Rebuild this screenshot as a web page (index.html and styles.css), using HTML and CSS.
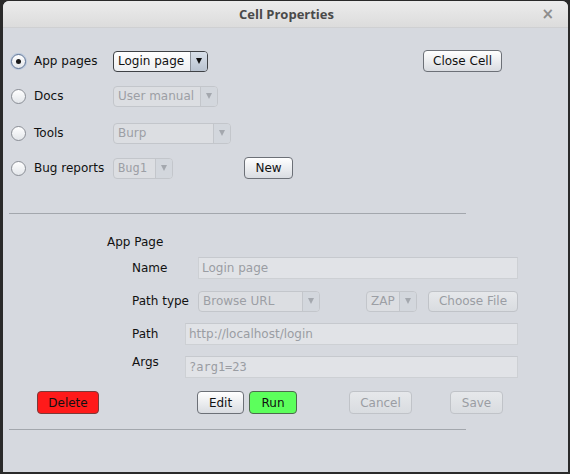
FILE: index.html
```html
<!DOCTYPE html>
<html>
<head>
<meta charset="utf-8">
<link rel="stylesheet" href="styles.css">
</head>
<body>
<div class="window">
  <div class="titlebar">
    <span class="title">Cell Properties</span>
    <span class="close">×</span>
  </div>
  <div class="content">
    <div class="row r1">
      <span class="radio checked"></span><span class="rlabel">App pages</span>
      <div class="combo w95"><span class="ctext">Login page</span><span class="arrow"><i></i></span></div>
      <button class="btn closecell">Close Cell</button>
    </div>
    <div class="row r2">
      <span class="radio"></span><span class="rlabel">Docs</span>
      <div class="combo dis w105"><span class="ctext">User manual</span><span class="arrow"><i></i></span></div>
    </div>
    <div class="row r3">
      <span class="radio"></span><span class="rlabel">Tools</span>
      <div class="combo dis w118"><span class="ctext">Burp</span><span class="arrow"><i></i></span></div>
    </div>
    <div class="row r4">
      <span class="radio"></span><span class="rlabel">Bug reports</span>
      <div class="combo dis w60"><span class="ctext mono">Bug1</span><span class="arrow"><i></i></span></div>
      <button class="btn newbtn">New</button>
    </div>
    <div class="sep sep1"></div>
    <div class="section">App Page</div>
    <div class="frow fname">
      <span class="flabel lw66">Name</span>
      <div class="field f320">Login page</div>
    </div>
    <div class="frow fpt">
      <span class="flabel lw66">Path type</span>
      <div class="combo dis w122"><span class="ctext">Browse URL</span><span class="arrow"><i></i></span></div>
      <div class="combo dis w51 zap"><span class="ctext">ZAP</span><span class="arrow"><i></i></span></div>
      <button class="btn dbtn choose">Choose File</button>
    </div>
    <div class="frow fpath">
      <span class="flabel lw53">Path</span>
      <div class="field f333">http://localhost/login</div>
    </div>
    <div class="frow fargs">
      <span class="flabel lw53 up">Args</span>
      <div class="field f333 mono">?arg1=23</div>
    </div>
    <div class="brow">
      <button class="btn del">Delete</button>
      <button class="btn edit">Edit</button>
      <button class="btn run">Run</button>
      <button class="btn dbtn cancel">Cancel</button>
      <button class="btn dbtn save">Save</button>
    </div>
    <div class="sep sep2"></div>
  </div>
</div>
</body>
</html>
```

FILE: styles.css
```css
html, body {
  margin: 0;
  padding: 0;
}
body {
  background: #2a2a2a;
  width: 570px;
  height: 474px;
  overflow: hidden;
  font-family: "DejaVu Sans", sans-serif;
  font-size: 12px;
  color: #111;
}
.window {
  margin: 1px 2px 0 3px;
  height: 471px;
  background: #d6d9df;
  border-radius: 6px 6px 0 0;
  overflow: hidden;
}
.titlebar {
  height: 27px;
  background: linear-gradient(#ececec, #dcdcdc);
  border-bottom: 1px solid #cfd0d2;
  box-sizing: border-box;
  display: flex;
  align-items: center;
  justify-content: center;
  position: relative;
}
.title {
  font-family: "Open Sans", sans-serif;
  font-weight: bold;
  font-size: 13px;
  color: #4a4a4a;
  margin-left: 2px;
}
.close {
  position: absolute;
  right: 14px;
  top: 4px;
  font-family: "DejaVu Sans", sans-serif;
  font-weight: bold;
  font-size: 15px;
  color: #8d8d8d;
}
.content {
  display: flex;
  flex-direction: column;
}
.row {
  display: flex;
  align-items: center;
  height: 22px;
}
.r1 { margin-top: 22px; }
.r2 { margin-top: 13px; }
.r3 { margin-top: 15px; }
.r4 { margin-top: 13px; }
.radio {
  width: 13px;
  height: 13px;
  border: 1px solid #8a8e95;
  border-radius: 50%;
  background: linear-gradient(#ffffff, #e3e6ea);
  margin-left: 8px;
  flex: none;
  display: flex;
  align-items: center;
  justify-content: center;
}
.radio.checked {
  border-color: #5d7395;
  box-shadow: 0 0 0 1px #b8c7dc;
}
.radio.checked::after {
  content: "";
  width: 5px;
  height: 5px;
  border-radius: 50%;
  background: #1b1b1b;
}
.rlabel {
  margin-left: 8px;
  width: 79px;
  flex: none;
  white-space: nowrap;
}
.combo {
  height: 21px;
  box-sizing: border-box;
  border: 1px solid #3e4145;
  border-radius: 4px;
  background: linear-gradient(#ffffff, #eceef1);
  display: flex;
  align-items: stretch;
  flex: none;
  overflow: hidden;
}
.ctext {
  flex: 1;
  padding-left: 4px;
  display: flex;
  align-items: center;
  white-space: nowrap;
  font-size: 12px;
}
.arrow {
  width: 16px;
  border-left: 1px solid #8a9099;
  background: linear-gradient(#d9e0ea, #b9c3d0);
  display: flex;
  align-items: center;
  justify-content: center;
}
.arrow i {
  width: 0;
  height: 0;
  border-left: 3.5px solid transparent;
  border-right: 3.5px solid transparent;
  border-top: 6px solid #111;
}
.combo.dis {
  border-color: #c3c6cb;
  background: #dcdee2;
}
.combo.dis .ctext { color: #9c9fa5; }
.combo.dis .arrow {
  border-left-color: #c3c6cb;
  background: #d3d7dd;
}
.combo.dis .arrow i { border-top-color: #a4a8ae; }
.w95 { width: 95px; }
.w105 { width: 105px; }
.w118 { width: 118px; }
.w60 { width: 60px; }
.w122 { width: 122px; }
.w51 { width: 51px; }
.mono { font-family: "DejaVu Sans Mono", monospace; }
.btn {
  font-family: "DejaVu Sans", sans-serif;
  font-size: 12px;
  color: #111;
  height: 22px;
  box-sizing: border-box;
  border: 1px solid #6c7077;
  border-radius: 4px;
  background: linear-gradient(#ffffff, #d9dce1);
  padding: 0;
  flex: none;
}
.closecell { width: 79px; margin-left: 215px; }
.newbtn { width: 49px; margin-left: 71px; }
.sep {
  height: 1px;
  background: #a3a7ad;
  width: 457px;
  margin-left: 6px;
}
.sep1 { margin-top: 34px; }
.section {
  margin-top: 19px;
  margin-left: 104px;
  height: 18px;
  line-height: 18px;
}
.frow {
  display: flex;
  align-items: center;
  height: 22px;
  margin-left: 129px;
}
.fname { margin-top: 6px; }
.fpt { margin-top: 11px; }
.fpath { margin-top: 11px; }
.fargs { margin-top: 11px; }
.flabel { flex: none; }
.lw66 { width: 66px; }
.lw53 { width: 53px; }
.up { position: relative; top: -5px; }
.field {
  height: 22px;
  box-sizing: border-box;
  border: 1px solid #cdd0d4;
  border-top-color: #c6c9ce;
  background: #e1e3e7;
  color: #9a9da3;
  padding-left: 3px;
  display: flex;
  align-items: center;
  white-space: nowrap;
  flex: none;
}
.f320 { width: 320px; }
.f333 { width: 333px; }
.zap { margin-left: 46px; }
.dbtn {
  border-color: #c0c3c8;
  background: linear-gradient(#e6e8eb, #d9dce0);
  color: #9a9da3;
}
.choose { width: 90px; margin-left: 11px; height: 21px; }
.brow {
  display: flex;
  align-items: center;
  margin-top: 13px;
  height: 23px;
  margin-left: 34px;
}
.brow .btn { height: 23px; }
.del {
  width: 62px;
  background: #ff1a1a;
  border-color: #7a3a3a;
}
.edit { width: 47px; margin-left: 98px; }
.run {
  width: 48px;
  margin-left: 5px;
  background: #5cff5c;
  border-color: #4d6a4d;
}
.cancel { width: 63px; margin-left: 52px; }
.save { width: 53px; margin-left: 38px; }
.sep2 { margin-top: 15px; }
```
